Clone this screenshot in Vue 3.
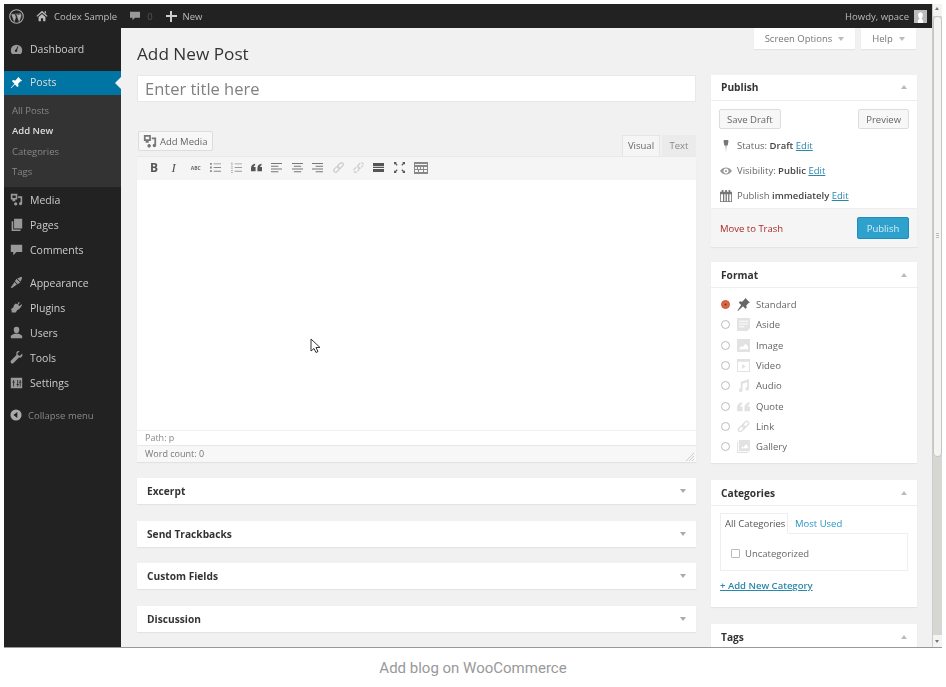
<script setup>
const subItems = [
  { label: 'All Posts' },
  { label: 'Add New', current: true },
  { label: 'Categories' },
  { label: 'Tags' }
]
const formats = [
  { label: 'Standard', icon: 'pin', checked: true },
  { label: 'Aside', icon: 'aside' },
  { label: 'Image', icon: 'image' },
  { label: 'Video', icon: 'video' },
  { label: 'Audio', icon: 'audio' },
  { label: 'Quote', icon: 'quote' },
  { label: 'Link', icon: 'link' },
  { label: 'Gallery', icon: 'gallery' }
]
const boxes = ['Excerpt', 'Send Trackbacks', 'Custom Fields', 'Discussion']
const mediaIcon = 'M1 1h8v7H6.500v2H3V8H1zM3 3v3h4V3zM10 4h5v9a2 2 0 1 1-2-2V6h-3zM7 11.500a2 2 0 1 0 .01 0z'
const menuA = [
  { label: 'Media', icon: mediaIcon },
  { label: 'Pages', icon: 'M5 1h10v12H5z M2 4h2v10h9v2H2z' },
  { label: 'Comments', icon: 'M1 2h14v9H8l-4 4v-4H1z' }
]
const menuB = [
  { label: 'Appearance', icon: 'M9 3l5-2 1 1-2 5zM8 3.500l4.500 4.500-3 2-3.500-3.500zM5.500 7.500l3 3L2 15l-1-1z' },
  { label: 'Plugins', icon: 'M11 1l1 1-2 3 2 1 2-2 1 1-2 3-2 2-2 1-2 3H2v-3l-1-1 3-2 1-3 2-2 2 1z' },
  { label: 'Users', icon: 'M8 1a3.400 3.400 0 0 1 3.400 3.600C11.400 7 10 9 8 9S4.600 7 4.600 4.600A3.400 3.400 0 0 1 8 1zM1 15v-3l4-2.500h6l4 2.500v3z' },
  { label: 'Tools', icon: 'M15 3l-3 3-2-1-1-2 3-3C9 -1 7 2 8 5l-7 7c-1 2 1 4 3 3l7-7c3 1 5-2 4-5z' },
  { label: 'Settings', icon: 'M1 2h14v13H1zM4 5v2H3v1h1v5h1V8h1V7H5V5zM9 5v5H8v1h1v2h1v-2h1v-1h-1V5zM12 5v2h-1v1h1v5h1V8h1V7h-1V5z' }
]
</script>

<template>
  <div class="page">
    <div class="shot">
      <div class="window">
        <header class="adminbar">
          <svg class="wp" viewBox="0 0 20 20">
            <circle cx="10" cy="10" r="9" fill="none" stroke="#aaa" stroke-width="1.500" />
            <path d="M3.500 7l3.500 10 2-6-1.500-4zM8 6.500h6M10 7l3.500 10 2.500-7c.5-2-.5-3-1-4-1 0-1.500 1-1 2" fill="#aaa" stroke="#aaa" stroke-width=".6" />
          </svg>
          <svg class="home" viewBox="0 0 14 14"><path d="M7 1l6.500 6-1 1L7 3.200 1.500 8l-1-1zM3 8.200L7 4.800l4 3.400V13H8.300V9.500H5.700V13H3zM10 1.500h1.700v3L10 3z" fill="#bbb" /></svg>
          <span class="bar-text site">Codex Sample</span>
          <svg class="bubble" viewBox="0 0 12 12"><path d="M0 1h12v7H6l-3 3V8H0z" fill="#999" /></svg>
          <span class="bar-text count">0</span>
          <span class="plus"></span>
          <span class="bar-text">New</span>
          <span class="howdy bar-text">Howdy, wpace</span>
          <span class="avatar"><svg viewBox="0 0 14 14"><path d="M4 14c0-3 1-4 2-4.500C5 8.500 4.500 7 4.500 5.500 4.500 3.500 5.500 2.500 7 2.500s2.500 1 2.500 3c0 1.500-.5 3-1.500 4 1 .5 2 1.500 2 4.500z" fill="#fff" /></svg></span>
        </header>

        <div class="workspace">
          <nav class="side">
            <div class="menu-row first">
              <svg class="mi" viewBox="0 0 16 16"><path d="M8 2a7 7 0 0 0-7 7c0 2 .8 3.500 1.500 4.500h11C14.200 12.500 15 11 15 9a7 7 0 0 0-7-7zM7.300 8L9.500 4l.8.4L8.700 8.600a1.500 1.500 0 1 1-1.400-.6z" fill="#999" fill-rule="evenodd" /></svg>
              <span>Dashboard</span>
            </div>
            <div class="menu-row active">
              <svg class="mi" viewBox="0 0 16 16"><path d="M10 1l5 5-2 .5-3 3 .5 3-1.500 1-3-3L1.500 15 1 14.500 5.500 9.500l-3-3 1-1.500 3 .5 3-3z" fill="#fff" /></svg>
              <span>Posts</span>
              <i class="notch"></i>
            </div>
            <ul class="sub">
              <li v-for="s in subItems" :key="s.label" :class="{ current: s.current }">{{ s.label }}</li>
            </ul>
            <div v-for="m in menuA" :key="m.label" class="menu-row">
              <svg class="mi" viewBox="0 0 16 16"><path :d="m.icon" fill="#999" fill-rule="evenodd" /></svg>
              <span>{{ m.label }}</span>
            </div>
            <div class="sep"></div>
            <div v-for="m in menuB" :key="m.label" class="menu-row">
              <svg class="mi" viewBox="0 0 16 16"><path :d="m.icon" fill="#999" fill-rule="evenodd" /></svg>
              <span>{{ m.label }}</span>
            </div>
            <div class="collapse">
              <svg class="mi small" viewBox="0 0 14 14"><circle cx="7" cy="7" r="6.500" fill="#aaa" /><path d="M8.500 3.500v7L4 7z" fill="#222" /></svg>
              <span>Collapse menu</span>
            </div>
          </nav>

          <main class="main">
            <div class="heading-row">
              <h1>Add New Post</h1>
              <div class="meta-tabs">
                <span class="meta-tab wide">Screen Options <i class="down"></i></span>
                <span class="meta-tab">Help <i class="down"></i></span>
              </div>
            </div>

            <div class="columns">
              <section class="left">
                <div class="title-input">Enter title here</div>

                <div class="media-row">
                  <button class="add-media">
                    <svg viewBox="0 0 16 16" width="14" height="14"><path :d="mediaIcon" fill="#777" fill-rule="evenodd" /></svg>
                    Add Media
                  </button>
                  <div class="edit-tabs">
                    <span class="edit-tab on">Visual</span>
                    <span class="edit-tab">Text</span>
                  </div>
                </div>

                <div class="editor">
                  <div class="toolbar">
                    <b class="tb b">B</b>
                    <i class="tb it">I</i>
                    <span class="tb abc">ABC</span>
                    <svg class="ti" viewBox="0 0 12 12"><path d="M0 1h2v2H0zM4 1.500h8v1H4zM0 5h2v2H0zM4 5.500h8v1H4zM0 9h2v2H0zM4 9.500h8v1H4z" fill="#888" /></svg>
                    <svg class="ti" viewBox="0 0 12 12"><path d="M.5 .5h1v3h-1zM0 5h2v.7H0zM0 7h2v.7H0zM0 9h2v.7H0zM0 11h2v.7H0zM4 1.500h8v1H4zM4 5.500h8v1H4zM4 9.500h8v1H4z" fill="#999" /></svg>
                    <svg class="ti" viewBox="0 0 12 12"><path d="M0 7c0-3 1.500-4.500 4.500-5v1.500C3.500 4 3 4.500 3 5.500h2V10H0zM7 7c0-3 1.500-4.500 4.500-5v1.500c-1 .5-1.500 1-1.500 2h2V10H7z" fill="#555" /></svg>
                    <svg class="ti" viewBox="0 0 12 12"><path d="M0 1h12v1.200H0zM0 4h8v1.200H0zM0 7h12v1.200H0zM0 10h8v1.200H0z" fill="#777" /></svg>
                    <svg class="ti" viewBox="0 0 12 12"><path d="M0 1h12v1.200H0zM2 4h8v1.200H2zM0 7h12v1.200H0zM2 10h8v1.200H2z" fill="#777" /></svg>
                    <svg class="ti" viewBox="0 0 12 12"><path d="M0 1h12v1.200H0zM4 4h8v1.200H4zM0 7h12v1.200H0zM4 10h8v1.200H4z" fill="#777" /></svg>
                    <svg class="ti" viewBox="0 0 12 12"><g transform="rotate(-45 6 6)" fill="none" stroke="#ccc" stroke-width="1.300"><rect x="-.5" y="4" width="7" height="4" rx="2" /><rect x="5.500" y="4" width="7" height="4" rx="2" /></g></svg>
                    <svg class="ti" viewBox="0 0 12 12"><g transform="rotate(-45 6 6)" fill="none" stroke="#ccc" stroke-width="1.300" stroke-dasharray="3 1"><rect x="-.5" y="4" width="7" height="4" rx="2" /><rect x="5.500" y="4" width="7" height="4" rx="2" /></g></svg>
                    <svg class="ti" viewBox="0 0 12 12"><path d="M0 1h12v3.500H0zM0 5.500h12v1H0zM0 7.500h12V11H0z" fill="#555" /></svg>
                    <svg class="ti" viewBox="0 0 12 12"><path d="M0 0h3L2 1l2 2-1 1-2-2-1 1zM12 0v3l-1-1-2 2-1-1 2-2-1-1zM0 12V9l1 1 2-2 1 1-2 2 1 1zM12 12H9l1-1-2-2 1-1 2 2 1-1z" fill="#555" /></svg>
                    <svg class="ti wide" viewBox="0 0 14 12"><path d="M0 0h14v12H0zM1 2v1h12V2zM1 5v2h2V5zM4 5v2h2V5zM7 5v2h2V5zM10 5v2h3V5zM1 8v2h3V8zM5 8v2h4V8zM10 8v2h3V8z" fill="#888" fill-rule="evenodd" /></svg>
                  </div>
                  <div class="canvas"></div>
                  <div class="path">Path: p</div>
                  <div class="wordcount">
                    <span>Word count: 0</span>
                    <svg class="grip" viewBox="0 0 8 8"><path d="M8 0L0 8M8 3L3 8M8 6L6 8" stroke="#ccc" fill="none" /></svg>
                  </div>
                </div>

                <div class="closed-boxes">
                  <div v-for="b in boxes" :key="b" class="closed">
                    <h3>{{ b }}</h3>
                    <i class="down dark"></i>
                  </div>
                </div>
              </section>

              <aside class="right">
                <div class="box publish">
                  <div class="box-head"><h3>Publish</h3><i class="up"></i></div>
                  <div class="pub-buttons">
                    <span class="btn">Save Draft</span>
                    <span class="btn">Preview</span>
                  </div>
                  <div class="pub-line">
                    <svg class="pi" viewBox="0 0 12 12"><path d="M4 0h4l.5 1-.8 4.500H6.400L6 12l-.4-6.500H4.300L3.500 1z" fill="#777" /></svg>
                    <span>Status: <b>Draft</b> <a>Edit</a></span>
                  </div>
                  <div class="pub-line">
                    <svg class="pi" viewBox="0 0 14 12"><path d="M0 6c2-3 4.500-4 7-4s5 1 7 4c-2 3-4.500 4-7 4S2 9 0 6zM7 3a3 3 0 1 0 .01 0zM7 4.800a1.200 1.200 0 1 1-.01 0z" fill="#999" fill-rule="evenodd" /></svg>
                    <span>Visibility: <b>Public</b> <a>Edit</a></span>
                  </div>
                  <div class="pub-line">
                    <svg class="pi" viewBox="0 0 14 14"><path d="M0 2h2V0h2v2h2V0h2v2h2V0h2v2h2v12H0zM1 5v8h2.500V5zM5 5v8h1.500V5zM8 5v8h1.500V5zM11 5v8h2V5z" fill="#777" fill-rule="evenodd" /></svg>
                    <span>Publish <b>immediately</b> <a>Edit</a></span>
                  </div>
                  <div class="pub-foot">
                    <span class="trash">Move to Trash</span>
                    <span class="btn-primary">Publish</span>
                  </div>
                </div>

                <div class="box format">
                  <div class="box-head"><h3>Format</h3><i class="up"></i></div>
                  <ul class="formats">
                    <li v-for="f in formats" :key="f.label">
                      <span class="radio" :class="{ checked: f.checked }"></span>
                      <svg class="fi" viewBox="0 0 14 14">
                        <path v-if="f.icon === 'pin'" d="M9 0l5 5-1.500 .5L10 8l.5 2.500-1.500 1-2.500-2.500L1 14l-.5-.5L4.500 7.500 2 5l1-1.500L5.500 4 8 1.500z" fill="#666" />
                        <path v-else-if="f.icon === 'aside'" d="M0 0h14v11l-3 3H0zM2 3v1h10V3zM2 6v1h10V6zM2 9v1h6V9z" fill="#e2e2e2" fill-rule="evenodd" />
                        <path v-else-if="f.icon === 'image'" d="M0 0h14v14H0zM2 11h10V8L9 5 6 9 4.500 7.500z" fill="#e2e2e2" fill-rule="evenodd" />
                        <path v-else-if="f.icon === 'video'" d="M0 0h14v14H0zM1 3v10h12V3zM5.500 5.500l4 2.500-4 2.500z" fill="#e2e2e2" fill-rule="evenodd" />
                        <path v-else-if="f.icon === 'audio'" d="M4 3l9-3v10.500a2 2 0 1 1-2-2V3.500L6 5v7a2 2 0 1 1-2-2z" fill="#e2e2e2" />
                        <path v-else-if="f.icon === 'quote'" d="M0 8c0-3 2-5 5.500-5.500V4.500C4 5 3.500 6 3.500 7H6v5H0zM8 8c0-3 2-5 5.500-5.500V4.500C12 5 11.500 6 11.500 7H14v5H8z" fill="#e2e2e2" />
                        <g v-else-if="f.icon === 'link'" transform="rotate(-45 7 7)" fill="none" stroke="#ddd" stroke-width="1.400"><rect x="0" y="5" width="8" height="4" rx="2" /><rect x="6" y="5" width="8" height="4" rx="2" /></g>
                        <path v-else d="M2 0h12v12H2zM0 2h1v11h11v1H0zM4 9h8V7L9.500 4.500 7 8 6 7z" fill="#e2e2e2" fill-rule="evenodd" />
                      </svg>
                      <span>{{ f.label }}</span>
                    </li>
                  </ul>
                </div>

                <div class="box cats">
                  <div class="box-head"><h3>Categories</h3><i class="up"></i></div>
                  <div class="cat-body">
                    <div class="cat-tabs">
                      <span class="cat-tab on">All Categories</span>
                      <span class="cat-tab link">Most Used</span>
                    </div>
                    <div class="cat-panel">
                      <span class="check"></span>
                      <span>Uncategorized</span>
                    </div>
                    <a class="add-cat">+ Add New Category</a>
                  </div>
                </div>

                <div class="box tags">
                  <div class="box-head plain"><h3>Tags</h3><i class="up"></i></div>
                </div>
              </aside>
            </div>

            <svg class="cursor" viewBox="0 0 11 16"><path d="M1 1v12l3-2.500 2 4 2-1-2-4h4z" fill="#fff" stroke="#333" stroke-width="1" /></svg>
          </main>
        </div>
      </div>

      <div class="scrollbar">
        <span class="arrow-up"></span>
        <div class="thumb"><i class="grab"></i></div>
        <span class="arrow-dn"></span>
      </div>
    </div>
    <p class="caption">Add blog on WooCommerce</p>
  </div>
</template>

<style>
html, body { background: #fff; }
</style>

<style scoped>
.page { width: 946px; height: 687px; overflow: hidden; background: #fff; padding: 4px 4px 0; box-sizing: border-box; font-family: "Open Sans", sans-serif; }
.shot { width: 938px; height: 644px; display: flex; overflow: hidden; border-bottom: 1px solid #999; box-sizing: border-box; filter: blur(.45px); }
.window { width: 928px; flex: none; display: flex; flex-direction: column; }
.caption { margin: 11px 0 0; text-align: center; font: 15px/18px Roboto, sans-serif; color: #999; }
.adminbar { height: 24px; flex: none; background: #222; display: flex; align-items: center; color: #ccc; }
.wp { width: 15px; height: 15px; margin-left: 5px; }
.home { width: 12px; height: 12px; margin-left: 12px; }
.bar-text { font-size: 9.500px; color: #bbb; }
.site { margin-left: 6px; }
.bubble { width: 10px; height: 10px; margin-left: 13px; }
.count { margin-left: 7px; color: #555; }
.plus { width: 11px; height: 11px; margin: 0 6px 0 13px; position: relative; background: linear-gradient(#ccc, #ccc) center / 11px 2px no-repeat, linear-gradient(#ccc, #ccc) center / 2px 11px no-repeat; }
.howdy { margin-left: auto; }
.avatar { width: 13px; height: 13px; background: #bbb; margin: 0 5px 0 5px; display: block; overflow: hidden; }
.avatar svg { display: block; }

.workspace { flex: 1; display: flex; min-height: 0; }
.side { width: 117px; flex: none; background: #222; color: #ccc; font-size: 10.500px; }
.menu-row { height: 25px; display: flex; align-items: center; padding: 0 0 0 6px; box-sizing: border-box; position: relative; }
.menu-row span { margin-left: 7px; }
.first { margin: 9px 0; padding-bottom: 1px; }
.mi { width: 13px; height: 13px; flex: none; }
.active { height: 24px; background: #0074a2; color: #ddd; padding-bottom: 2px; }
.notch { position: absolute; right: 0; top: 6px; border: 6px solid transparent; border-right-color: #f1f1f1; border-left-width: 0; }
.sub { list-style: none; margin: 0; padding: 6px 0 5px 8px; height: 92px; box-sizing: border-box; background: #333; font-size: 9.500px; color: #888; }
.sub li { height: 20.300px; line-height: 20.300px; }
.sub .current { color: #ddd; font-weight: 600; }
.sep { height: 8px; }
.collapse { display: flex; align-items: center; padding-left: 6px; margin-top: 8px; height: 24px; font-size: 9.500px; color: #888; }
.collapse span { margin-left: 6px; }
.small { width: 12px; height: 12px; }

.main { flex: 1; min-width: 0; background: #f1f1f1; padding: 0 15px 0 16px; position: relative; overflow: hidden; }
.heading-row { height: 47px; display: flex; justify-content: space-between; align-items: flex-start; }
h1 { font-size: 17.200px; font-weight: 400; color: #333; margin: 15px 0 0; line-height: 22px; }
.meta-tabs { display: flex; gap: 6px; margin-right: 1px; }
.meta-tab { width: 55px; height: 21px; background: #fff; font-size: 9.500px; color: #777; display: flex; align-items: center; justify-content: center; gap: 6px; box-shadow: 0 1px 1px rgba(0,0,0,.05); }
.meta-tab.wide { width: 101px; }
.down { width: 0; height: 0; border: 3px solid transparent; border-top: 4px solid #bbb; border-bottom: 0; display: block; }
.down.dark { border-top-color: #aaa; }
.up { width: 0; height: 0; border: 3px solid transparent; border-bottom: 4px solid #bbb; border-top: 0; display: block; }

.columns { display: flex; gap: 15px; align-items: flex-start; }
.left { width: 559px; flex: none; }
.right { width: 206px; flex: none; }
.title-input { height: 27px; background: #fff; border: 1px solid #e8e8e8; box-sizing: border-box; font-size: 16.500px; color: #808080; line-height: 25px; padding-left: 7px; }
.media-row { display: flex; justify-content: space-between; align-items: flex-end; height: 25px; margin-top: 29px; padding-left: 1px; }
.add-media { height: 20px; width: 75px; margin-bottom: 5px; background: #f7f7f7; border: 1px solid #ddd; border-radius: 2px; font: 9.500px "Open Sans", sans-serif; color: #666; display: flex; align-items: center; gap: 3px; padding: 0 0 0 4px; box-sizing: border-box; }
.edit-tabs { display: flex; gap: 2px; }
.edit-tab { height: 21px; width: 34px; display: flex; align-items: center; justify-content: center; font-size: 9.500px; color: #888; background: #ebebeb; padding-bottom: 1px; box-sizing: border-box; }
.edit-tab.on { width: 38px; background: #f5f5f5; color: #666; border: 1px solid #e5e5e5; border-bottom: 0; }
.editor { box-shadow: 0 1px 1px rgba(0,0,0,.06); }
.toolbar { height: 24px; background: #f5f5f5; display: flex; align-items: center; padding: 0 0 2px 12px; border-top: 1px solid #e8e8e8; box-sizing: border-box; }
.tb { width: 20.400px; flex: none; font-size: 12px; color: #555; text-align: left; font-family: "Liberation Serif", serif; padding-left: 1px; box-sizing: border-box; }
.b { font-family: "Open Sans", sans-serif; }
.it { font-size: 13px; padding-left: 2px; }
.abc { font-size: 5px; font-family: "Open Sans", sans-serif; font-weight: 700; color: #666; padding-left: 1px; }
.ti { width: 11px; height: 11px; margin-right: 9.400px; flex: none; }
.ti.wide { width: 14px; height: 12px; margin-right: 0; margin-left: 0; }
.canvas { height: 250px; background: #fff; }
.path { height: 16px; background: #fff; border-top: 1px solid #f0f0f0; border-bottom: 1px solid #e8e8e8; box-sizing: border-box; font-size: 9px; color: #888; line-height: 14px; padding-left: 8px; }
.wordcount { height: 16px; background: #f7f7f7; font-size: 9px; color: #777; line-height: 16px; padding-left: 8px; display: flex; justify-content: space-between; align-items: center; }
.grip { width: 8px; height: 8px; margin: 6px 2px 0 0; }
.closed-boxes { margin-top: 16px; display: flex; flex-direction: column; gap: 16.500px; }
.closed { height: 26px; background: #fff; display: flex; align-items: center; justify-content: space-between; padding: 0 10px; box-shadow: 0 1px 1px rgba(0,0,0,.05); }
h3 { margin: 0; font-size: 10.200px; font-weight: 700; color: #333; }

.box { background: #fff; box-shadow: 0 1px 1px rgba(0,0,0,.05); margin-bottom: 15px; font-size: 9.500px; color: #666; }
.box-head { height: 26px; display: flex; align-items: center; justify-content: space-between; padding: 0 10px; border-bottom: 1px solid #eee; box-sizing: border-box; }
.publish .box-head, .tags .box-head { padding-bottom: 1px; }
.box-head.plain { border-bottom: 0; }
.pub-buttons { display: flex; justify-content: space-between; padding: 8px 8px 0; }
.btn { height: 20px; display: flex; align-items: center; padding: 0 7px; background: #f7f7f7; border: 1px solid #ddd; border-radius: 2px; color: #666; box-sizing: border-box; }
.pub-line { height: 25px; display: flex; align-items: center; padding-left: 9px; }
.pub-buttons + .pub-line { margin-top: 4px; }
.pi { width: 12px; height: 12px; margin-right: 5px; flex: none; }
.pub-line b { color: #444; font-weight: 600; }
.pub-line a { color: #2a88ad; text-decoration: underline; }
.pub-foot { height: 39px; background: #f5f5f5; border-top: 1px solid #eee; box-sizing: border-box; display: flex; align-items: center; justify-content: space-between; padding: 0 8px 0 9px; }
.trash { color: #a82a2a; }
.btn-primary { width: 52px; height: 22px; background: #2ea2cc; border: 1px solid #1e8cbe; border-radius: 2px; color: #d5eef8; display: flex; align-items: center; justify-content: center; box-sizing: border-box; }

.format { height: 201px; }
.formats { list-style: none; margin: 0; padding: 6.500px 0 0 10px; }
.formats li { height: 20.300px; display: flex; align-items: center; }
.radio { width: 9px; height: 9px; border: 1px solid #bbb; border-radius: 50%; box-sizing: border-box; margin-right: 7px; flex: none; background: #fff; }
.radio.checked { background: #7a3a28; border-color: #dd6644; box-shadow: inset 0 0 0 2.500px #dd6644; }
.fi { width: 13px; height: 13px; margin-right: 6px; flex: none; }

.cats { height: 127px; margin-top: 17px; margin-bottom: 17px; }
.cat-body { padding: 7px 9px 0; }
.cat-tabs { display: flex; height: 21px; }
.cat-tab { padding: 0 4px; display: flex; align-items: center; }
.cat-tab.on { border: 1px solid #eee; border-bottom: 1px solid #fff; box-sizing: border-box; height: 21px; width: 68px; color: #555; white-space: nowrap; position: relative; z-index: 1; }
.cat-tab.link { color: #2a95c5; margin-left: 3px; }
.cat-panel { margin-top: -1px; height: 38px; width: 188px; border: 1px solid #eee; box-sizing: border-box; display: flex; align-items: center; padding: 2px 0 0 10px; }
.check { width: 9px; height: 9px; border: 1px solid #bbb; border-radius: 1px; box-sizing: border-box; margin-right: 5px; }
.add-cat { display: block; margin-top: 8px; color: #2a88ad; font-weight: 600; text-decoration: underline; }
.tags { height: 40px; margin-bottom: 0; }

.cursor { position: absolute; left: 189px; top: 310px; width: 11px; height: 16px; }

.scrollbar { width: 10px; flex: none; background: #d6d6d3; position: relative; border-left: 1px solid #ccc; box-sizing: border-box; }
.thumb { position: absolute; left: 0; right: 0; top: 12px; height: 441px; background: #f4f4f2; border: 1px solid #c4c4c4; border-radius: 4px; box-sizing: border-box; }
.grab { position: absolute; left: 2px; right: 2px; top: 216px; height: 6px; background: repeating-linear-gradient(#bbb 0 1px, transparent 1px 2px); }
.arrow-up, .arrow-dn { position: absolute; left: 0; right: 0; height: 12px; background: #f4f4f2; }
.arrow-up { top: 0; }
.arrow-dn { bottom: 0; }
.arrow-up::after, .arrow-dn::after { content: ""; position: absolute; left: 2px; width: 0; height: 0; border: 2.500px solid transparent; }
.arrow-up::after { top: 3px; border-bottom: 3px solid #777; border-top: 0; }
.arrow-dn::after { top: 5px; border-top: 3px solid #777; border-bottom: 0; }
</style>
